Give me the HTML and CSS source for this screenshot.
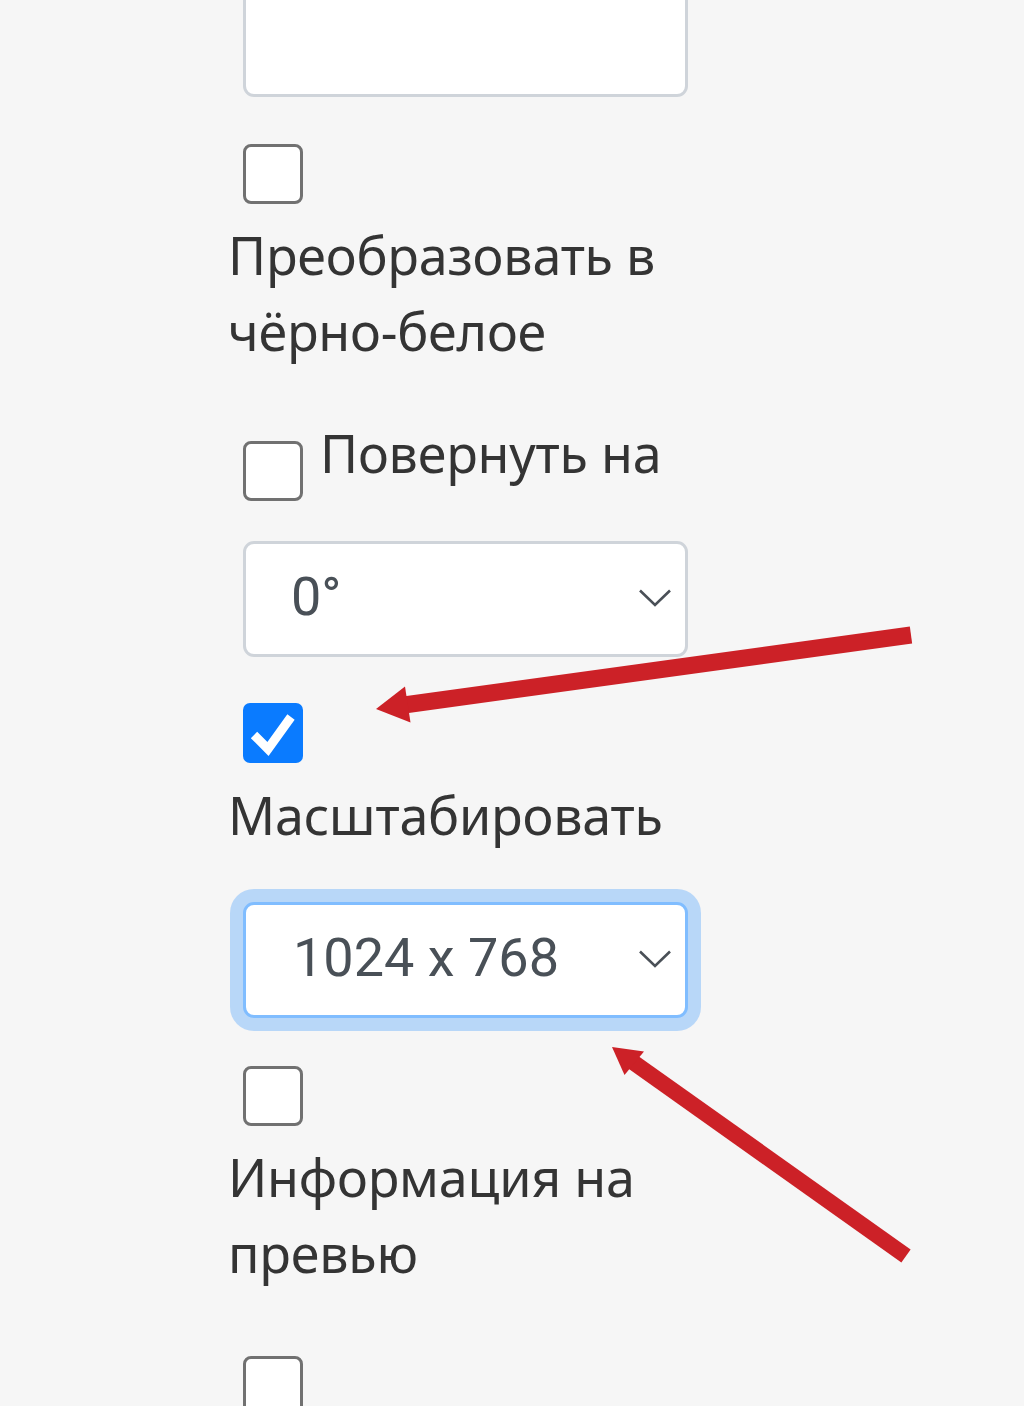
FILE: index.html
```html
<!DOCTYPE html>
<html lang="ru">
<head>
<meta charset="utf-8">
<title>Настройки</title>
<link rel="stylesheet" href="styles.css">
</head>
<body>
<div class="form">
  <div class="textbox"></div>

  <div class="checkbox cb-first"></div>
  <div class="label lbl-after-cb">Преобразовать в чёрно-белое</div>

  <div class="inline-row">
    <div class="checkbox inline-cb"></div>
    <div class="label inline-label">Повернуть на</div>
  </div>

  <div class="select sel-rotate">
    <span class="select-value">0°</span>
    <svg class="chevron" width="32" height="18" viewBox="0 0 32 18"><polyline points="1,1.5 16,16 31,1.5" fill="none" stroke="#4a5057" stroke-width="2.6"/></svg>
  </div>

  <div class="checkbox checked cb-scale">
    <svg width="60" height="60" viewBox="0 0 60 60"><polyline points="11,32 25,46 48,14" fill="none" stroke="#ffffff" stroke-width="9"/></svg>
  </div>
  <div class="label lbl-scale">Масштабировать</div>

  <div class="select focused sel-size">
    <span class="select-value">1024 x 768</span>
    <svg class="chevron" width="32" height="18" viewBox="0 0 32 18"><polyline points="1,1.5 16,16 31,1.5" fill="none" stroke="#4a5057" stroke-width="2.6"/></svg>
  </div>

  <div class="checkbox cb-info"></div>
  <div class="label lbl-after-cb">Информация на превью</div>

  <div class="checkbox cb-last"></div>
</div>

<svg class="arrows" width="1024" height="1406" viewBox="0 0 1024 1406">
  <line x1="911" y1="635" x2="404" y2="705" stroke="#cc2127" stroke-width="17"/>
  <polygon points="376,709 410.5,722.5 405,686.5" fill="#cc2127"/>
  <line x1="906" y1="1256" x2="630" y2="1060" stroke="#cc2127" stroke-width="16"/>
  <polygon points="612,1047 644,1051.5 624.5,1075" fill="#cc2127"/>
</svg>
</body>
</html>
```

FILE: styles.css
```css
html, body {
  margin: 0;
  padding: 0;
  background: #f6f6f6;
}

body {
  position: relative;
  width: 1024px;
  height: 1406px;
  overflow: hidden;
  font-family: "Noto Sans", "Open Sans", sans-serif;
}

.form {
  margin-left: 228px;
  width: 460px;
  display: flex;
  flex-direction: column;
  align-items: flex-start;
}

.textbox {
  box-sizing: border-box;
  margin-top: -20px;
  margin-left: 15px;
  width: 445px;
  height: 117px;
  background: #ffffff;
  border: 3px solid #cfd4da;
  border-radius: 11px;
}

.checkbox {
  box-sizing: border-box;
  width: 60px;
  height: 60px;
  margin-left: 15px;
  flex: none;
  background: #ffffff;
  border: 3px solid #717171;
  border-radius: 8px;
}

.checkbox.checked {
  background: #0a7bff;
  border: none;
  border-radius: 7px;
}

.checkbox.checked svg {
  display: block;
}

.cb-first { margin-top: 47px; }
.cb-scale { margin-top: 46px; }
.cb-info { margin-top: 48px; }
.cb-last { margin-top: 65px; }

.label {
  font-size: 52px;
  line-height: 76px;
  letter-spacing: -0.2px;
  color: #343434;
}

.lbl-after-cb { margin-top: 13px; }
.lbl-scale { margin-top: 14px; }

.inline-row {
  display: flex;
  align-items: flex-start;
  margin-top: 46px;
}

.inline-cb { margin-top: 26px; }
.inline-label { margin-left: 17px; }

.select {
  box-sizing: border-box;
  margin-left: 15px;
  width: 445px;
  height: 116px;
  background: #ffffff;
  border: 3px solid #cfd4da;
  border-radius: 11px;
  display: flex;
  align-items: center;
  justify-content: space-between;
  padding: 0 14px 0 45px;
  font-family: Roboto, "Noto Sans", sans-serif;
  font-size: 54px;
  color: #495057;
}

.select-value {
  line-height: 1;
  margin-top: -4px;
}

.chevron {
  display: block;
  margin-top: -2px;
}

.sel-rotate { margin-top: 40px; }
.sel-size { margin-top: 49px; }

.sel-size .select-value { padding-left: 2px; }

.select.focused {
  border-color: #80bdff;
  box-shadow: 0 0 0 13px rgba(0, 123, 255, 0.25);
}

.arrows {
  position: absolute;
  left: 0;
  top: 0;
  pointer-events: none;
}
```
